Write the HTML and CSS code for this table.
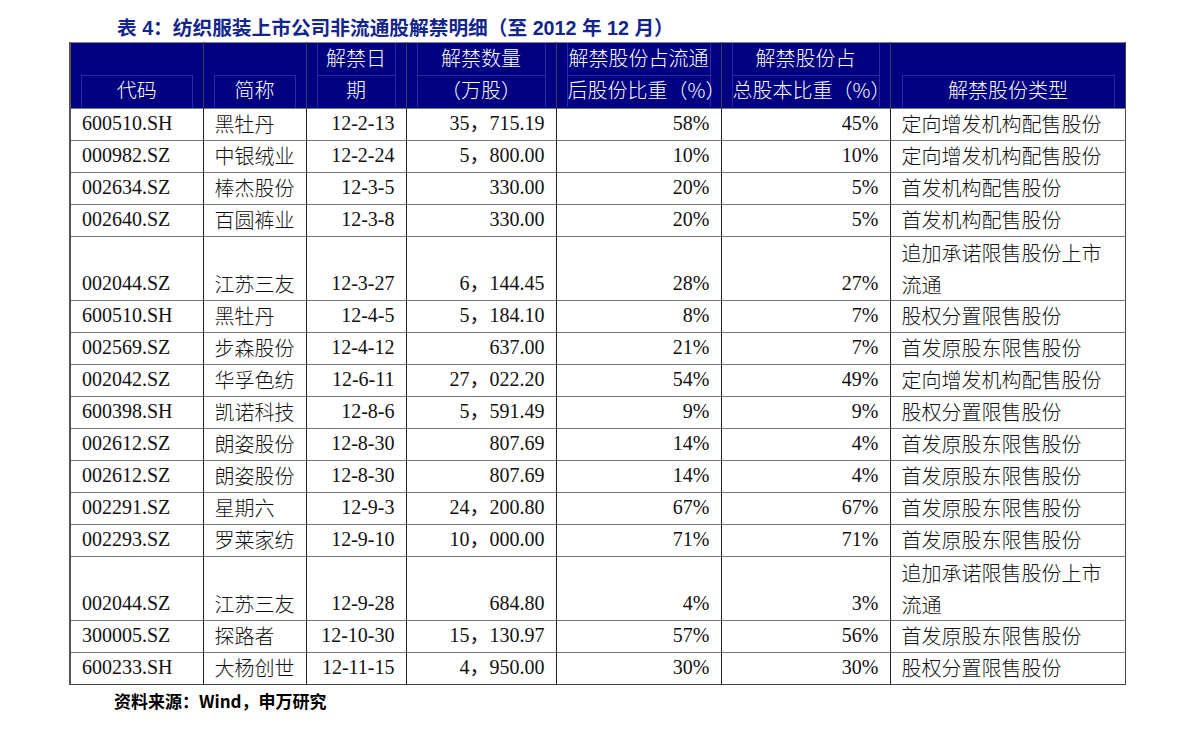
FILE: index.html
```html
<!DOCTYPE html>
<html lang="zh-CN">
<head>
<meta charset="utf-8">
<title>表4 纺织服装上市公司非流通股解禁明细</title>
<link rel="stylesheet" href="styles.css">
</head>
<body>
<div class="page">
  <h1 class="title">表 4：纺织服装上市公司非流通股解禁明细（至 2012 年 12 月）</h1>
  <table class="grid">
    <colgroup>
      <col class="c1"><col class="c2"><col class="c3"><col class="c4"><col class="c5"><col class="c6"><col class="c7">
    </colgroup>
    <thead>
      <tr>
        <th><div class="hbox low"><div class="l2">代码</div></div></th>
        <th><div class="hbox low"><div class="l2">简称</div></div></th>
        <th><div class="hbox"><div class="l1">解禁日</div><div class="l2">期</div></div></th>
        <th><div class="hbox"><div class="l1">解禁数量</div><div class="l2">（万股）</div></div></th>
        <th><div class="hbox"><div class="l1">解禁股份占流通</div><div class="l2">后股份比重（%）</div></div></th>
        <th><div class="hbox"><div class="l1">解禁股份占</div><div class="l2">总股本比重（%）</div></div></th>
        <th><div class="hbox low wide"><div class="l2">解禁股份类型</div></div></th>
      </tr>
    </thead>
    <tbody>
      <tr><td class="code">600510.SH</td><td class="name">黑牡丹</td><td class="num">12-2-13</td><td class="num">35，715.19</td><td class="num">58%</td><td class="num">45%</td><td class="name">定向增发机构配售股份</td></tr>
      <tr><td class="code">000982.SZ</td><td class="name">中银绒业</td><td class="num">12-2-24</td><td class="num">5，800.00</td><td class="num">10%</td><td class="num">10%</td><td class="name">定向增发机构配售股份</td></tr>
      <tr><td class="code">002634.SZ</td><td class="name">棒杰股份</td><td class="num">12-3-5</td><td class="num">330.00</td><td class="num">20%</td><td class="num">5%</td><td class="name">首发机构配售股份</td></tr>
      <tr><td class="code">002640.SZ</td><td class="name">百圆裤业</td><td class="num">12-3-8</td><td class="num">330.00</td><td class="num">20%</td><td class="num">5%</td><td class="name">首发机构配售股份</td></tr>
      <tr class="tall"><td class="code">002044.SZ</td><td class="name">江苏三友</td><td class="num">12-3-27</td><td class="num">6，144.45</td><td class="num">28%</td><td class="num">27%</td><td class="name wrap">追加承诺限售股份上市流通</td></tr>
      <tr><td class="code">600510.SH</td><td class="name">黑牡丹</td><td class="num">12-4-5</td><td class="num">5，184.10</td><td class="num">8%</td><td class="num">7%</td><td class="name">股权分置限售股份</td></tr>
      <tr><td class="code">002569.SZ</td><td class="name">步森股份</td><td class="num">12-4-12</td><td class="num">637.00</td><td class="num">21%</td><td class="num">7%</td><td class="name">首发原股东限售股份</td></tr>
      <tr><td class="code">002042.SZ</td><td class="name">华孚色纺</td><td class="num">12-6-11</td><td class="num">27，022.20</td><td class="num">54%</td><td class="num">49%</td><td class="name">定向增发机构配售股份</td></tr>
      <tr><td class="code">600398.SH</td><td class="name">凯诺科技</td><td class="num">12-8-6</td><td class="num">5，591.49</td><td class="num">9%</td><td class="num">9%</td><td class="name">股权分置限售股份</td></tr>
      <tr><td class="code">002612.SZ</td><td class="name">朗姿股份</td><td class="num">12-8-30</td><td class="num">807.69</td><td class="num">14%</td><td class="num">4%</td><td class="name">首发原股东限售股份</td></tr>
      <tr><td class="code">002612.SZ</td><td class="name">朗姿股份</td><td class="num">12-8-30</td><td class="num">807.69</td><td class="num">14%</td><td class="num">4%</td><td class="name">首发原股东限售股份</td></tr>
      <tr><td class="code">002291.SZ</td><td class="name">星期六</td><td class="num">12-9-3</td><td class="num">24，200.80</td><td class="num">67%</td><td class="num">67%</td><td class="name">首发原股东限售股份</td></tr>
      <tr><td class="code">002293.SZ</td><td class="name">罗莱家纺</td><td class="num">12-9-10</td><td class="num">10，000.00</td><td class="num">71%</td><td class="num">71%</td><td class="name">首发原股东限售股份</td></tr>
      <tr class="tall"><td class="code">002044.SZ</td><td class="name">江苏三友</td><td class="num">12-9-28</td><td class="num">684.80</td><td class="num">4%</td><td class="num">3%</td><td class="name wrap">追加承诺限售股份上市流通</td></tr>
      <tr><td class="code">300005.SZ</td><td class="name">探路者</td><td class="num">12-10-30</td><td class="num">15，130.97</td><td class="num">57%</td><td class="num">56%</td><td class="name">首发原股东限售股份</td></tr>
      <tr><td class="code">600233.SH</td><td class="name">大杨创世</td><td class="num">12-11-15</td><td class="num">4，950.00</td><td class="num">30%</td><td class="num">30%</td><td class="name">股权分置限售股份</td></tr>
    </tbody>
  </table>
  <p class="source">资料来源：Wind，申万研究</p>
</div>
</body>
</html>
```

FILE: styles.css
```css
html, body {
  margin: 0;
  padding: 0;
  background: #ffffff;
}

.page {
  padding: 18px 0 0 69px;
  font-family: "Noto Sans CJK SC", sans-serif;
  color: #000;
}

.title {
  margin: 0 0 3px 48px;
  height: 21px;
  font-family: "Liberation Sans", "Noto Sans CJK SC", sans-serif;
  font-size: 19.7px;
  line-height: 21px;
  font-weight: 700;
  color: #13268c;
  white-space: nowrap;
}

.grid {
  border-collapse: collapse;
  table-layout: fixed;
  width: 1055px;
  border-top: 1px solid #888;
  border-left: 2px solid #555;
  border-right: 1px solid #444;
  border-bottom: 1px solid #444;
}

.c1 { width: 133px; }
.c2 { width: 103px; }
.c3 { width: 100px; }
.c4 { width: 150px; }
.c5 { width: 165px; }
.c6 { width: 169px; }
.c7 { width: 235px; }

.grid th {
  height: 64px;
  padding: 0;
  background: #000080;
  color: #ffffff;
  font-weight: 300;
  font-size: 20px;
  border-left: 1px solid #3a3a5a;
  vertical-align: top;
}

.hbox {
  margin: 0 10px;
  height: 64px;
  display: flex;
  flex-direction: column;
  border-left: 1px solid #2a2aa0;
  border-right: 1px solid #2a2aa0;
}

.hbox.low {
  margin-top: 32px;
  height: 32px;
  border-top: 1px solid #2a2aa0;
}

.hbox.wide {
  margin: 32px 10px 0 11px;
}

.l1 {
  height: 32px;
  line-height: 30px;
  border-bottom: 1px solid #2a2aa0;
  white-space: nowrap;
}

.l2 {
  flex: 1;
  line-height: 27px;
  white-space: nowrap;
}

.grid td {
  height: 29px;
  padding: 0 11px 2px;
  font-size: 20px;
  font-weight: 300;
  line-height: 29px;
  color: #111;
  border-top: 1px solid #777;
  border-left: 1px solid #222;
  vertical-align: bottom;
  white-space: nowrap;
  overflow: hidden;
}

.grid tr.tall td {
  height: 61px;
}

.grid tr.tall td.wrap {
  white-space: normal;
  word-break: break-all;
  line-height: 31.5px;
  padding-bottom: 0;
}

.grid td.code,
.grid td.num {
  font-family: "Liberation Serif", "Noto Sans CJK SC", serif;
  font-weight: 400;
}

.grid td.num {
  text-align: right;
}

.grid td.name {
  text-align: left;
}

.source {
  margin: 6px 0 0 45px;
  font-size: 17px;
  line-height: 20px;
  font-weight: 700;
  font-family: "Noto Sans CJK SC", sans-serif;
}
```
